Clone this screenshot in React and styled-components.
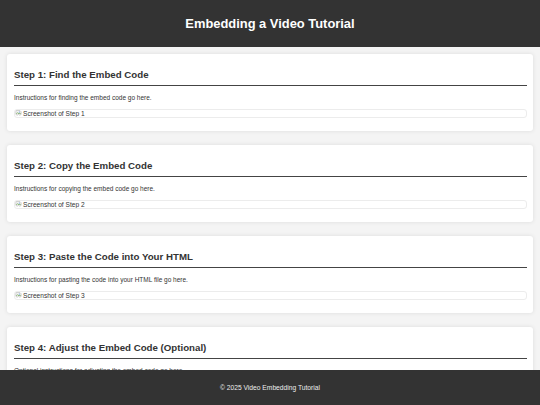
import styled, { createGlobalStyle } from 'styled-components';

const GlobalStyle = createGlobalStyle`
    html, body {
        margin: 0;
        padding: 0;
        background: #f4f4f4;
        color: #333;
        font-family: "Liberation Sans", Arial, sans-serif;
    }
`;

const Header = styled.header`
    height: 47px;
    background-color: #333;
    display: flex;
    align-items: center;
    justify-content: center;
`;

const Title = styled.h1`
    margin: 0;
    color: #fff;
    font-size: 12.9px;
    font-weight: bold;
`;

const Main = styled.main`
    display: flex;
    flex-direction: column;
    gap: 14px;
    padding: 7px 7px 60px 7px;
`;

const Card = styled.section`
    background-color: #fff;
    border-radius: 3px;
    box-shadow: 0 0 4px rgba(0, 0, 0, 0.1);
    padding: 15px 6px 13px 7px;
`;

const StepTitle = styled.h2`
    margin: 0 0 8px 0;
    padding-bottom: 4px;
    border-bottom: 1px solid #444;
    font-size: 9.7px;
    line-height: 12px;
    font-weight: bold;
    color: #333;
`;

const Text = styled.p`
    margin: 0 0 7px 0;
    font-size: 6.5px;
    line-height: 8px;
    color: #333;
`;

const Shot = styled.div`
    display: flex;
    align-items: center;
    gap: 1px;
    height: 7px;
    border: 1px solid #ececec;
    border-radius: 3px;
    font-size: 6.6px;
    color: #333;
    overflow: hidden;
`;

const Footer = styled.footer`
    position: fixed;
    left: 0;
    right: 0;
    bottom: 0;
    height: 35px;
    background-color: #333;
    color: #eee;
    display: flex;
    align-items: center;
    justify-content: center;
    font-size: 6.7px;
`;

const steps = [
    { title: 'Step 1: Find the Embed Code', text: 'Instructions for finding the embed code go here.' },
    { title: 'Step 2: Copy the Embed Code', text: 'Instructions for copying the embed code go here.' },
    { title: 'Step 3: Paste the Code into Your HTML', text: 'Instructions for pasting the code into your HTML file go here.' },
    { title: 'Step 4: Adjust the Embed Code (Optional)', text: 'Optional instructions for adjusting the embed code go here.' },
];

function BrokenIcon() {
    return (
        <svg width="7" height="7" viewBox="0 0 16 16">
            <path d="M2 1h9l3 3v6l-3 2-3-2-3 2-3-2z" fill="#f3f3f3" stroke="#999" strokeWidth="1" />
            <path d="M3 9l3-3 3 3 2-2 2 2" fill="none" stroke="#5a9a3c" strokeWidth="1.5" />
            <circle cx="10" cy="4.5" r="1.3" fill="#4a8ad6" />
        </svg>
    );
}

export default function App() {
    return (
        <>
            <GlobalStyle />
            <Header>
                <Title>Embedding a Video Tutorial</Title>
            </Header>
            <Main>
                {steps.map((step, i) => (
                    <Card key={i}>
                        <StepTitle>{step.title}</StepTitle>
                        <Text>{step.text}</Text>
                        <Shot>
                            <BrokenIcon />
                            Screenshot of Step {i + 1}
                        </Shot>
                    </Card>
                ))}
            </Main>
            <Footer>© 2025 Video Embedding Tutorial</Footer>
        </>
    );
}
